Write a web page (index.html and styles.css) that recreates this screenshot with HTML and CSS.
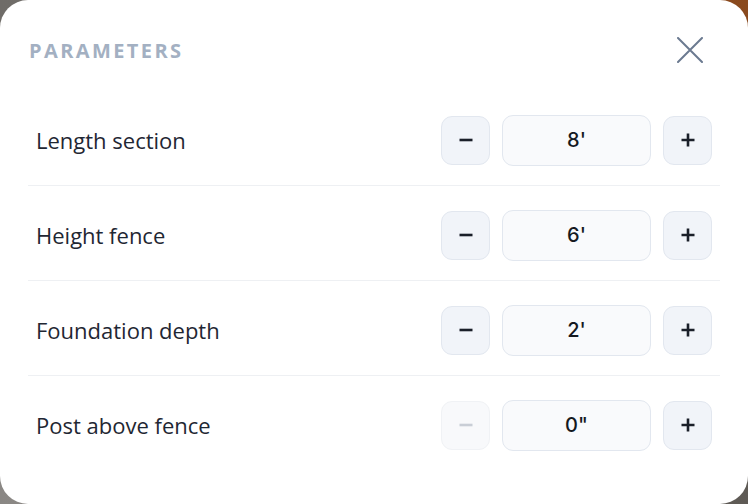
FILE: index.html
```html
<!DOCTYPE html>
<html lang="en">
<head>
<meta charset="utf-8">
<title>Parameters</title>
<link rel="stylesheet" href="styles.css">
</head>
<body>
<div class="modal">
  <div class="header">
    <h2 class="title">PARAMETERS</h2>
    <button class="close" aria-label="Close">
      <svg width="26" height="26" viewBox="0 0 26 26"><path d="M1 1 L25 25 M25 1 L1 25" stroke="#6b7a90" stroke-width="2" stroke-linecap="round" fill="none"/></svg>
    </button>
  </div>
  <div class="rows">
    <div class="row">
      <span class="label">Length section</span>
      <div class="stepper">
        <button class="step"><svg width="16" height="16" viewBox="0 0 16 16"><path d="M1.5 8h13" stroke="currentColor" stroke-width="2.6"/></svg></button>
        <div class="value">8'</div>
        <button class="step"><svg width="16" height="16" viewBox="0 0 16 16"><path d="M1.5 8h13M8 1.5v13" stroke="currentColor" stroke-width="2.6"/></svg></button>
      </div>
    </div>
    <div class="row">
      <span class="label">Height fence</span>
      <div class="stepper">
        <button class="step"><svg width="16" height="16" viewBox="0 0 16 16"><path d="M1.5 8h13" stroke="currentColor" stroke-width="2.6"/></svg></button>
        <div class="value">6'</div>
        <button class="step"><svg width="16" height="16" viewBox="0 0 16 16"><path d="M1.5 8h13M8 1.5v13" stroke="currentColor" stroke-width="2.6"/></svg></button>
      </div>
    </div>
    <div class="row">
      <span class="label">Foundation depth</span>
      <div class="stepper">
        <button class="step"><svg width="16" height="16" viewBox="0 0 16 16"><path d="M1.5 8h13" stroke="currentColor" stroke-width="2.6"/></svg></button>
        <div class="value">2'</div>
        <button class="step"><svg width="16" height="16" viewBox="0 0 16 16"><path d="M1.5 8h13M8 1.5v13" stroke="currentColor" stroke-width="2.6"/></svg></button>
      </div>
    </div>
    <div class="row">
      <span class="label">Post above fence</span>
      <div class="stepper">
        <button class="step disabled"><svg width="16" height="16" viewBox="0 0 16 16"><path d="M1.5 8h13" stroke="currentColor" stroke-width="2.6"/></svg></button>
        <div class="value">0"</div>
        <button class="step"><svg width="16" height="16" viewBox="0 0 16 16"><path d="M1.5 8h13M8 1.5v13" stroke="currentColor" stroke-width="2.6"/></svg></button>
      </div>
    </div>
  </div>
</div>
</body>
</html>
```
FILE: styles.css
```css
* { box-sizing: border-box; }
html, body { margin: 0; padding: 0; }
body {
  width: 748px;
  height: 504px;
  overflow: hidden;
  background:
    linear-gradient(90deg, #6f6c68 0%, #7a746c 50%, #7b3c14 50%, #8a4a1e 100%) top / 100% 50% no-repeat,
    linear-gradient(90deg, #8a8784 0%, #9a9690 50%, #6e6a64 50%, #5e5a55 100%) bottom / 100% 50% no-repeat;
  font-family: "Open Sans", "Noto Sans", sans-serif;
}
.modal {
  width: 748px;
  height: 504px;
  background: #ffffff;
  border-radius: 28px;
  padding: 26px 28px 0 28px;
}
.header {
  height: 48px;
  display: flex;
  align-items: center;
  justify-content: space-between;
  margin-bottom: 17px;
}
.title {
  margin: 0;
  font-family: "Open Sans", sans-serif;
  font-weight: 700;
  font-size: 20px;
  letter-spacing: 2.4px;
  color: #a3b0c2;
  padding-left: 1px;
}
.close {
  border: 0;
  background: transparent;
  padding: 0;
  width: 26px;
  height: 26px;
  margin-right: 17px;
  display: flex;
  align-items: center;
  justify-content: center;
}
.rows { display: flex; flex-direction: column; }
.row {
  display: flex;
  align-items: center;
  justify-content: space-between;
  padding: 24px 8px 20px 8px;
  border-bottom: 1px solid #eef0f3;
}
.row:last-child { border-bottom: 0; }
.label {
  font-family: "Open Sans", sans-serif;
  font-size: 22px;
  color: #1f2733;
}
.stepper {
  display: flex;
  align-items: center;
  gap: 12px;
  height: 50px;
}
.step {
  width: 49px;
  height: 49px;
  border-radius: 11px;
  border: 1px solid #e2e7ef;
  background: #f1f4f9;
  color: #1a1f29;
  display: flex;
  align-items: center;
  justify-content: center;
  padding: 0;
}
.step.disabled {
  background: #f8f9fb;
  border-color: #f0f2f5;
  color: #c9ced6;
}
.value {
  width: 149px;
  height: 51px;
  border-radius: 11px;
  border: 1px solid #e2e7ef;
  background: #f9fafc;
  display: flex;
  align-items: center;
  justify-content: center;
  font-family: "Inter", sans-serif;
  font-weight: 500;
  font-size: 20px;
  color: #15191f;
}
```
